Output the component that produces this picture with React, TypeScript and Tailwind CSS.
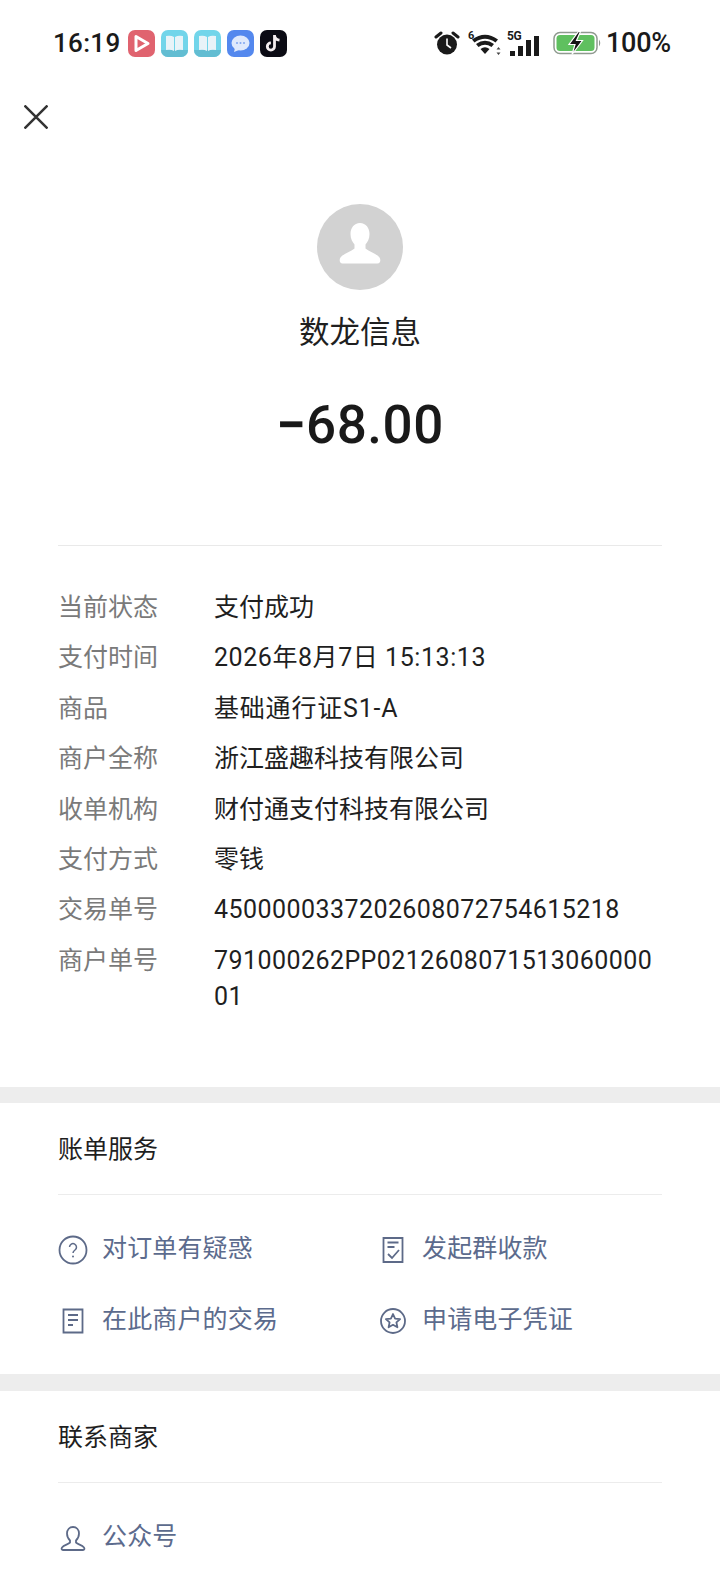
const rows = [
  { k: "当前状态", v: "支付成功", t: "tracking-normal" },
  { k: "支付时间", v: "2026年8月7日 15:13:13", t: "tracking-[0.56px]" },
  { k: "商品", v: "基础通行证S1-A", t: "tracking-[0.8px]" },
  { k: "商户全称", v: "浙江盛趣科技有限公司", t: "tracking-normal" },
  { k: "收单机构", v: "财付通支付科技有限公司", t: "tracking-normal" },
  { k: "支付方式", v: "零钱", t: "tracking-normal" },
  { k: "交易单号", v: "4500000337202608072754615218", t: "tracking-[0.44px]" },
  { k: "商户单号", v: "791000262PP021260807151306000001", t: "tracking-[0.44px]" },
];

function AppIcon({ bg, children }: { bg: string; children: React.ReactNode }) {
  return (
    <div className={`w-[27px] h-[27px] rounded-[7px] overflow-hidden flex items-center justify-center ${bg}`}>
      <svg viewBox="0 0 27 27" className="w-[27px] h-[27px]">
        {children}
      </svg>
    </div>
  );
}

function BookIcon() {
  return (
    <>
      <rect x="0" y="20" width="27" height="7" fill="#62bdd2" />
      <path d="M5 6q5-1 8 1v14q-3-2-8-1z" fill="#e8f3f8" />
      <path d="M22 6q-5-1-8 1v14q3-2 8-1z" fill="#e8f3f8" />
    </>
  );
}

function StatusBar() {
  return (
    <div className="h-[85px] pt-[1px] flex items-center justify-between pl-[53px] pr-[49px] text-[#1a1a1a]">
      <div className="flex items-center">
        <span className="text-[26px] font-medium w-[75px] tracking-[0.3px] font-['Roboto',sans-serif]">16:19</span>
        <div className="flex gap-[6px]">
          <AppIcon bg="bg-[#e0636f]">
            <path d="M8 6.500v14l12-7z" fill="none" stroke="#fff" strokeWidth="3" strokeLinejoin="round" />
          </AppIcon>
          <AppIcon bg="bg-[#72d5ea]"><BookIcon /></AppIcon>
          <AppIcon bg="bg-[#72d5ea]"><BookIcon /></AppIcon>
          <AppIcon bg="bg-[#5488ee]">
            <ellipse cx="13.500" cy="13" rx="9" ry="7.500" fill="#dfe9fc" />
            <path d="M8 18l-1 4 5-2z" fill="#dfe9fc" />
            <circle cx="10" cy="13" r="1" fill="#7fa5f0" />
            <circle cx="13.500" cy="13" r="1" fill="#7fa5f0" />
            <circle cx="17" cy="13" r="1" fill="#7fa5f0" />
          </AppIcon>
          <AppIcon bg="bg-[#0b0b14]">
            <path d="M14.500 5v11.500a3.600 3.600 0 1 1-3.600-3.600M14.500 5.500c.4 2.800 2.200 4.400 5 4.700" fill="none" stroke="#f4eef0" strokeWidth="2.800" />
          </AppIcon>
        </div>
      </div>
      <div className="flex items-center">
        <svg viewBox="0 0 26 26" className="w-[26px] h-[26px] mr-[8px]">
          <circle cx="13" cy="14.500" r="10" fill="#1a1a1a" />
          <path d="M2 7l5-4M24 7l-5-4" stroke="#1a1a1a" strokeWidth="3" strokeLinecap="round" />
          <path d="M13 8.500v6.500l4 3" fill="none" stroke="#fff" strokeWidth="1.600" />
        </svg>
        <svg viewBox="0 0 33 26" className="w-[33px] h-[26px] mr-[6px]">
          <text x="0" y="9" fontSize="11" fontWeight="700" fill="#1a1a1a" fontFamily="Roboto, sans-serif">6</text>
          <path d="M4 9.500Q17 0 30 9.500L27.500 12.500Q17 5 6.500 12.500z" fill="#1a1a1a" />
          <path d="M8 14Q17 7.500 26 14L23.500 17Q17 12.500 10.500 17z" fill="#1a1a1a" />
          <path d="M12.500 19Q17 15.500 21.500 19L17 24z" fill="#1a1a1a" />
          <path d="M30.500 17l-2 2.500h4zM30.500 25l-2-2.500h4z" fill="#444" />
        </svg>
        <div className="relative w-[36px] h-[26px] mr-[10px]">
          <span className="absolute top-0 left-0 text-[12px] font-bold leading-none tracking-[-0.3px] font-['Roboto',sans-serif]">5G</span>
          <div className="absolute bottom-0 left-[3px] flex items-end gap-[2.500px]">
            <div className="w-[5.500px] h-[5.500px] bg-[#1a1a1a]" />
            <div className="w-[5.500px] h-[10px] bg-[#1a1a1a]" />
            <div className="w-[5.500px] h-[16px] bg-[#1a1a1a]" />
            <div className="w-[5.500px] h-[20px] bg-[#1a1a1a]" />
          </div>
        </div>
        <svg viewBox="0 0 49 24" className="w-[49px] h-[24px] mr-[4px]">
          <rect x="1" y="1.500" width="43" height="21" rx="6" fill="#fff" stroke="#8f9a8f" strokeWidth="1.500" />
          <rect x="3.500" y="4" width="38" height="16" rx="3.500" fill="#5fc05f" />
          <path d="M46 8.500q2.500 3.500 0 7z" fill="#8f9a8f" />
          <path d="M25.500 0.500l-9.500 13h6l-3 10 10.500-14h-6l4-9z" fill="#141414" stroke="#fff" strokeWidth="1.200" />
        </svg>
        <span className="text-[27px] font-medium tracking-[-0.2px] font-['Roboto',sans-serif]">100%</span>
      </div>
    </div>
  );
}

function LinkItem({ icon, label, className }: { icon: React.ReactNode; label: string; className?: string }) {
  return (
    <div className={`flex items-center h-[30px] ${className ?? ""}`}>
      <svg viewBox="0 0 30 30" className="w-[30px] h-[30px] mr-[14px] mt-[2px] shrink-0" fill="none" stroke="#5d6a88" strokeWidth="1.800">
        {icon}
      </svg>
      <span className="text-[25px] leading-[30px] tracking-[0.15px] text-[#5c6b8d]">{label}</span>
    </div>
  );
}

export default function App() {
  return (
    <div className="w-[720px] h-[1581px] overflow-hidden bg-white text-[#1c1c1c] font-['Roboto','Noto_Sans_CJK_SC',sans-serif]">
      <StatusBar />

      {/* close */}
      <div className="pl-[24px] pt-[20px]">
        <svg viewBox="0 0 24 24" className="w-[24px] h-[24px]" stroke="#333" strokeWidth="2.500">
          <path d="M0.500 0.500l23 23M23.500 0.500l-23 23" />
        </svg>
      </div>

      {/* payee */}
      <div className="flex flex-col items-center pt-[75px]">
        <div className="w-[86px] h-[86px] rounded-full bg-[#d2d2d2] flex items-center justify-center">
          <svg viewBox="0 0 86 86" className="w-[86px] h-[86px]">
            <path d="M43 19c-6 0-9.500 5-9.500 11 0 5 2 8 4 10.500v4c-4 3.500-11 5-14 9-1.500 2-1 6 2 6h35c3 0 3.500-4 2-6-3-4-10-5.500-14-9v-4c2-2.500 4-5.500 4-10.500 0-6-3.500-11-9.500-11z" fill="#fff" />
          </svg>
        </div>
        <div className="mt-[23px] text-[30.500px] leading-[40px] text-[#1f1f1f]">数龙信息</div>
        <div className="mt-[40px] text-[53px] leading-[64px] font-medium tracking-[0.5px] text-[#191919]"><span className="font-bold">−</span>68.00</div>
      </div>

      <div className="mx-[58px] mt-[88px] border-t border-[#e9e9e9] h-0" />

      {/* details */}
      <div className="mx-[58px] pt-[44px] pb-[72px] flex flex-col gap-[14.400px]">
        {rows.map((row) => (
          <div key={row.k} className="flex text-[25px] leading-[36px]">
            <div className="w-[156px] shrink-0 text-[#7a7a7a]">{row.k}</div>
            <div className={`flex-1 min-w-0 break-all text-[#1f1f1f] ${row.t}`}>{row.v}</div>
          </div>
        ))}
      </div>

      <div className="h-[16px] bg-[#ededed]" />

      {/* bill services */}
      <div className="mx-[58px]">
        <div className="h-[92px] pt-[3px] flex items-center text-[25px] text-[#1f1f1f] border-b border-[#ececec]">账单服务</div>
        <div className="grid grid-cols-[320px_1fr] gap-y-[41px] pt-[39px] pb-[39.500px]">
          <LinkItem
            label="对订单有疑惑"
            icon={
              <>
                <circle cx="15" cy="15" r="13.500" />
                <path d="M11.500 12a3.500 3.500 0 1 1 5.500 3c-1.200 .8-2 1.400-2 3" strokeWidth="1.500" />
                <circle cx="15" cy="21.500" r="1" fill="#5d6a88" stroke="none" />
              </>
            }
          />
          <LinkItem
            label="发起群收款"
            icon={
              <path d="M5.500 3h19v24h-19zM9.500 7.500h11M9.500 12h7M10 19l4 4 7-8" />
            }
          />
          <LinkItem
            label="在此商户的交易"
            icon={<path d="M5.500 3.500h19v23h-19zM10 9h10M10 14h10M10 19h5" />}
          />
          <LinkItem
            label="申请电子凭证"
            icon={
              <>
                <circle cx="15" cy="15" r="12" />
                <path d="M15 8l2.100 4.600 5 .5-3.700 3.300 1 4.900-4.400-2.500-4.400 2.500 1-4.900-3.700-3.300 5-.5z" strokeLinejoin="round" />
              </>
            }
          />
        </div>
      </div>

      <div className="h-[17px] bg-[#ededed]" />

      {/* merchant contact */}
      <div className="mx-[58px]">
        <div className="h-[91.500px] pt-[3px] flex items-center text-[25px] text-[#1f1f1f] border-b border-[#ececec]">联系商家</div>
        <div className="pt-[39px]">
          <LinkItem
            label="公众号"
            icon={
              <path d="M15 4c-3.500 0-6 2.500-6 6.500 0 3 1.500 5.500 3 7v2c-2 2-6 2.500-8 5-.8 1-.4 2.500 1 2.500h20c1.400 0 1.800-1.500 1-2.500-2-2.500-6-3-8-5v-2c1.500-1.500 3-4 3-7 0-4-2.500-6.500-6-6.500z" />
            }
          />
        </div>
      </div>
    </div>
  );
}
